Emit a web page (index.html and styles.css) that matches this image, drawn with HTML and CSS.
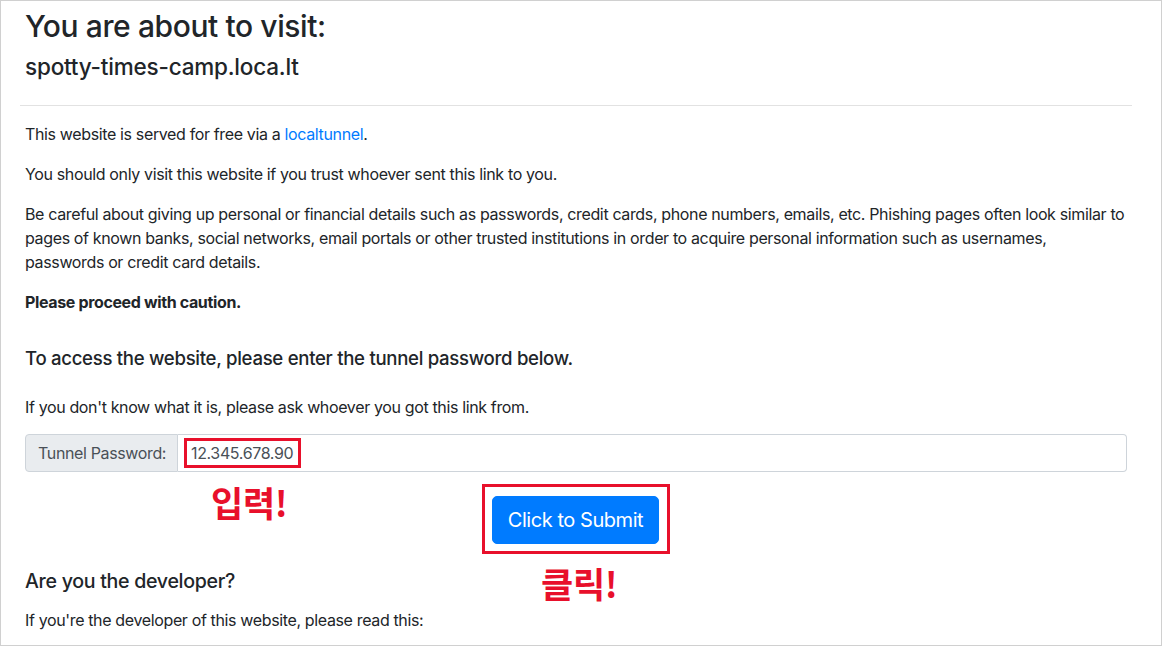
FILE: index.html
```html
<!DOCTYPE html>
<html lang="en">
<head>
<meta charset="utf-8">
<title>localtunnel</title>
<link rel="stylesheet" href="styles.css">
</head>
<body>
<div class="frame">
  <div class="container">
    <h2 class="title">You are about to visit:</h2>
    <h5 class="host">spotty-times-camp.loca.lt</h5>
    <hr class="rule">
    <p>This website is served for free via a <a href="#" class="link">localtunnel</a>.</p>
    <p>You should only visit this website if you trust whoever sent this link to you.</p>
    <p>Be careful about giving up personal or financial details such as passwords, credit cards, phone numbers, emails, etc. Phishing pages often look similar to pages of known banks, social networks, email portals or other trusted institutions in order to acquire personal information such as usernames, passwords or credit card details.</p>
    <p><strong>Please proceed with caution.</strong></p>
    <h5 class="sub">To access the website, please enter the tunnel password below.</h5>
    <p class="ask">If you don't know what it is, please ask whoever you got this link from.</p>
    <div class="input-group">
      <div class="addon">Tunnel Password:</div>
      <div class="field"><span class="mark">12.345.678.90</span></div>
    </div>
    <div class="submit-row">
      <div class="mark-box"><button class="btn">Click to Submit</button></div>
      <span class="note note-input">입력!</span>
      <span class="note note-click">클릭!</span>
    </div>
    <h5 class="dev">Are you the developer?</h5>
    <p class="dev-text">If you're the developer of this website, please read this:</p>
  </div>
</div>
</body>
</html>
```

FILE: styles.css
```css
* { box-sizing: border-box; }
html, body { margin: 0; padding: 0; background: #fff; }
body {
  font-family: Inter, "Liberation Sans", Arial, sans-serif;
  font-size: 16px;
  line-height: 24px;
  color: #212529;
  letter-spacing: -0.36px;
}
.frame {
  width: 1162px;
  height: 646px;
  border: 1px solid #d0d0d0;
  overflow: hidden;
  position: relative;
}
.container {
  padding: 0 34px 0 24px;
}
.title {
  margin: 5px 0 0;
  font-size: 30px;
  line-height: 40px;
  font-weight: 500;
  letter-spacing: -0.4px;
}
.host {
  margin: 8px 0 0;
  font-size: 22.5px;
  line-height: 26px;
  font-weight: 500;
  letter-spacing: -0.2px;
}
.rule {
  margin: 25px -5px 16px -5px;
  border: 0;
  border-top: 1px solid #e2e2e2;
}
p {
  margin: 0 0 16px;
}
strong { font-weight: 700; }
.link { color: #007bff; text-decoration: none; }
.sub {
  margin: 32px 0 0;
  font-size: 18.6px;
  line-height: 24px;
  font-weight: 500;
  letter-spacing: -0.3px;
}
.ask { margin: 25px 0 15px; }
.input-group {
  display: flex;
  height: 38px;
}
.addon {
  display: flex;
  align-items: center;
  padding: 0 12px;
  background: #e9ecef;
  border: 1px solid #ced4da;
  border-radius: 4px 0 0 4px;
  color: #495057;
  font-size: 16px;
  white-space: nowrap;
  width: 153px;
}
.field {
  flex: 1;
  display: flex;
  align-items: center;
  padding: 0 6px 1px;
  border: 1px solid #ced4da;
  border-left: 0;
  border-radius: 0 4px 4px 0;
  color: #495057;
}
.mark {
  border: 3px solid #e8102b;
  padding: 0 5px 0 4px;
  line-height: 24px;
}
.submit-row {
  position: relative;
  display: flex;
  justify-content: center;
  margin-top: 12px;
}
.mark-box {
  border: 3px solid #e8102b;
  padding: 9px 8px 7px 7px;
}
.btn {
  display: block;
  font-family: inherit;
  font-size: 20px;
  line-height: 30px;
  padding: 8px 15px;
  color: #fff;
  background: #007bff;
  border: 1px solid #007bff;
  border-radius: 5px;
  letter-spacing: -0.45px;
}
.note {
  position: absolute;
  font-family: "Noto Sans CJK KR", sans-serif;
  font-weight: 700;
  font-size: 35px;
  line-height: 40px;
  letter-spacing: -0.3px;
  color: #e8102b;
}
.note-input { left: 186px; top: -2px; }
.note-click { left: 516px; top: 79px; }
.dev {
  margin: 15px 0 0;
  font-size: 19.6px;
  line-height: 24px;
  font-weight: 500;
  letter-spacing: -0.3px;
}
.dev-text { margin-top: 15px; }
```
